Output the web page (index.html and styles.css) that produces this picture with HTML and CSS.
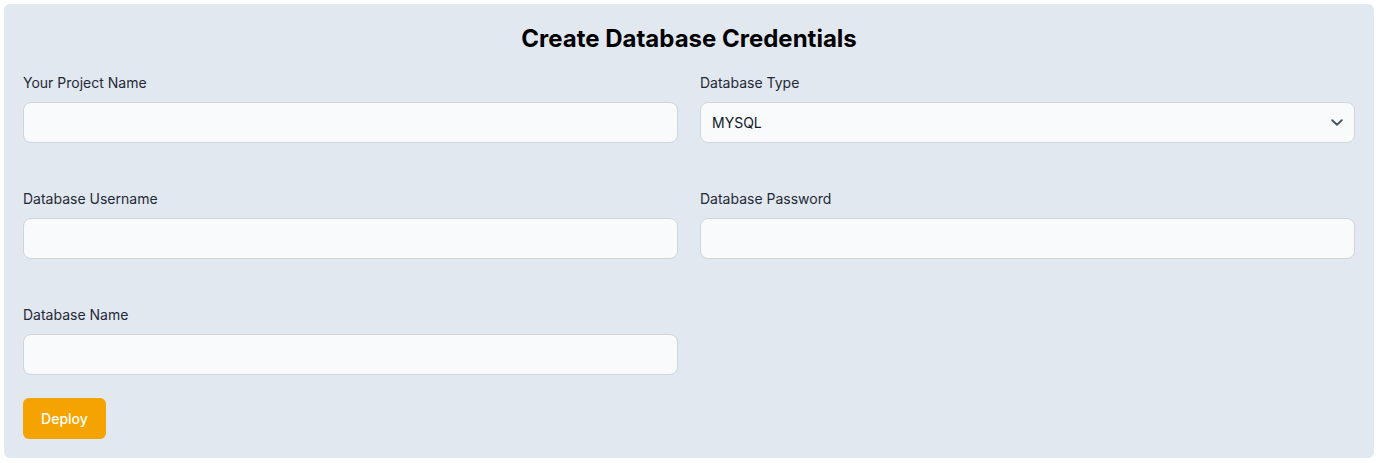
FILE: index.html
```html
<!DOCTYPE html>
<html lang="en">
<head>
<meta charset="utf-8">
<title>Create Database Credentials</title>
<link rel="stylesheet" href="styles.css">
</head>
<body>
<main class="card">
  <h1 class="title">Create Database Credentials</h1>
  <form class="form">
    <div class="grid">
      <label class="field">
        <span class="label">Your Project Name</span>
        <input class="input" type="text">
      </label>
      <label class="field">
        <span class="label">Database Type</span>
        <span class="select-wrap">
          <select class="input select">
            <option>MYSQL</option>
          </select>
          <svg class="chevron" width="12" height="7" viewBox="0 0 12 7" fill="none" stroke="#4b5563" stroke-width="1.9" stroke-linecap="round" stroke-linejoin="round"><path d="M1.2 1.2L6 5.8l4.8-4.6"/></svg>
        </span>
      </label>
      <label class="field">
        <span class="label">Database Username</span>
        <input class="input" type="text">
      </label>
      <label class="field">
        <span class="label">Database Password</span>
        <input class="input" type="password">
      </label>
      <label class="field">
        <span class="label">Database Name</span>
        <input class="input" type="text">
      </label>
    </div>
    <button class="btn" type="button">Deploy</button>
  </form>
</main>
</body>
</html>
```

FILE: styles.css
```css
* { box-sizing: border-box; }
html, body { background: #ffffff; }
body {
  margin: 0;
  padding: 4px 5px 5px 4px;
  font-family: "Inter", "Noto Sans", sans-serif;
  color: #1f2937;
}
.card {
  background: #e2e8f0;
  border-radius: 6px;
  padding: 19px;
}
.title {
  margin: 0;
  text-align: center;
  font-size: 24px;
  line-height: 32px;
  font-weight: 700;
  color: #000;
}
.form {
  margin-top: 18px;
  display: flex;
  flex-direction: column;
  align-items: flex-start;
}
.grid {
  width: 100%;
  display: grid;
  grid-template-columns: 1fr 1fr;
  column-gap: 22px;
  row-gap: 46px;
}
.field {
  display: flex;
  flex-direction: column;
  gap: 9px;
}
.label {
  font-size: 14px;
  line-height: 20px;
  color: #1f2937;
}
.input {
  width: 100%;
  height: 41px;
  background: #f8fafc;
  border: 1px solid #d1d5db;
  border-radius: 8px;
  padding: 0 11px;
  font: inherit;
  font-size: 14px;
  color: #111827;
  outline: none;
}
.select-wrap {
  position: relative;
  display: block;
}
.select {
  appearance: none;
  -webkit-appearance: none;
}
.chevron {
  position: absolute;
  right: 12px;
  top: 17px;
  pointer-events: none;
}
.btn {
  margin-top: 23px;
  width: 83px;
  height: 41px;
  background: #f5a300;
  color: #fff;
  border: 0;
  border-radius: 6px;
  font: inherit;
  font-size: 14px;
  font-weight: 500;
}
```
